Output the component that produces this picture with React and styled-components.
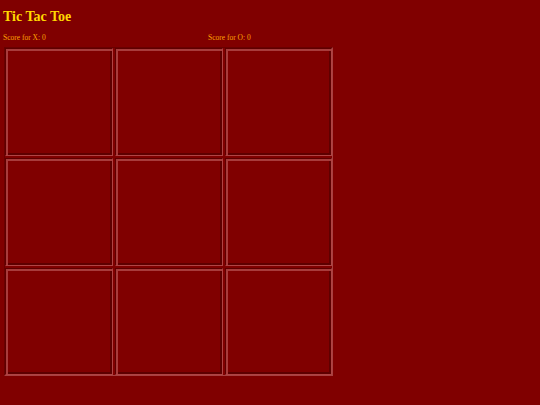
import React, { useState } from "react";
import styled, { createGlobalStyle } from "styled-components";

const GlobalStyle = createGlobalStyle`
  html, body {
    margin: 0;
    background: #800000;
  }
  body {
    padding: 4px 4px;
    font-family: "Liberation Serif", "Times New Roman", serif;
  }
`;

const Title = styled.h1`
  margin: 5px 0 0 -1px;
  font-size: 14px;
  font-weight: bold;
  line-height: 15px;
  color: #ffd700;
`;

const ScoreRow = styled.div`
  display: grid;
  grid-template-columns: 205px 205px;
  margin: 10px 0 5px -1px;
  font-size: 7.5px;
  line-height: 8px;
  color: #ffa500;
`;

const Board = styled.div`
  display: grid;
  grid-template-columns: 108px 108px 107px;
  grid-template-rows: 108px 108px 107px;
  gap: 2px;
  width: max-content;
  border: 1px solid;
  border-color: #6a0000 #a84040 #a84040 #6a0000;
`;

const Cell = styled.div`
  box-sizing: border-box;
  border: 1px solid;
  border-color: #5e0000 #b04444 #b04444 #5e0000;
  box-shadow: inset 2px 2px 0 #a83c3c, inset -2px -2px 0 #5e0000;
  background: #800000;
  cursor: pointer;
`;

export default function App() {
  const [cells] = useState(Array(9).fill(null));
  const [score] = useState({ X: 0, O: 0 });

  return (
    <>
      <GlobalStyle />
      <Title>Tic Tac Toe</Title>
      <ScoreRow>
        <span>Score for X: {score.X}</span>
        <span>Score for O: {score.O}</span>
      </ScoreRow>
      <Board>
        {cells.map((c, i) => (
          <Cell key={i}>{c}</Cell>
        ))}
      </Board>
    </>
  );
}
